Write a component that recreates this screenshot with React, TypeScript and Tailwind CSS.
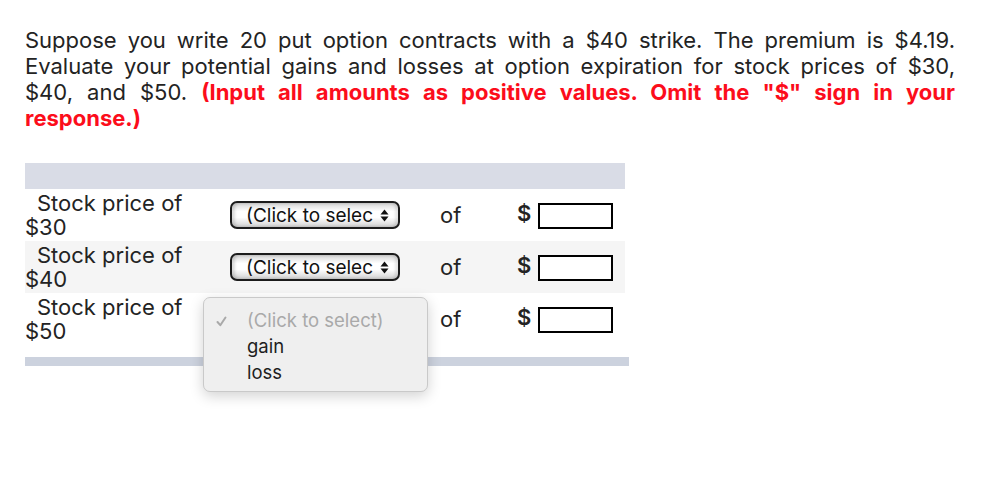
import React from "react";

const rows = [
  { price: "$30", shade: false, open: false },
  { price: "$40", shade: true, open: false },
  { price: "$50", shade: false, open: true },
];

function SelectArrows() {
  return (
    <svg width="9" height="15" viewBox="0 0 9 15" className="shrink-0">
      <path d="M4.5 1.5 L8.5 6.5 L0.5 6.5 Z" fill="#111" />
      <path d="M4.5 13.5 L8.5 8.5 L0.5 8.5 Z" fill="#111" />
    </svg>
  );
}

function FakeSelect() {
  return (
    <div className="flex h-[28px] w-[170px] items-center rounded-[7px] border-2 border-[#1c1c1c] bg-[linear-gradient(#d6d6d6,#ffffff_35%,#ffffff_60%,#d2d2d2)] pl-[14px] pr-[9px] shadow-[inset_3px_0_3px_rgba(0,0,0,0.14),inset_-3px_0_3px_rgba(0,0,0,0.1)]">
      <div className="whitespace-nowrap text-[19px] leading-none text-[#111]">
        (Click to selec
      </div>
      <div className="ml-auto">
        <SelectArrows />
      </div>
    </div>
  );
}

function Check() {
  return (
    <svg width="11" height="11" viewBox="0 0 11 11">
      <path d="M1.5 6 L4.3 9.2 L9.5 1.5" fill="none" stroke="#a9a9a9" strokeWidth="2" strokeLinecap="round" strokeLinejoin="round" />
    </svg>
  );
}

function Dropdown() {
  return (
    <div className="absolute left-[178px] top-[4px] z-10 h-[95px] w-[225px] rounded-[7px] border border-[#c9c9c9] bg-[#efefef] pt-[10px] shadow-[0_4px_14px_rgba(0,0,0,0.18)]">
      <div className="flex h-[26px] items-center text-[18.5px] text-[#a9a9a9]">
        <span className="flex w-[43px] pl-[12px]">
          <Check />
        </span>
        <span>(Click to select)</span>
      </div>
      <div className="flex h-[26px] items-center text-[18.5px] text-[#1e1e1e]">
        <span className="w-[43px]" />
        <span>gain</span>
      </div>
      <div className="flex h-[26px] items-center text-[18.5px] text-[#1e1e1e]">
        <span className="w-[43px]" />
        <span>loss</span>
      </div>
    </div>
  );
}

export default function App() {
  const line = "text-justify [text-align-last:justify]";
  return (
    <div className="min-h-[478px] w-[1004px] bg-white font-['Inter',sans-serif] text-[#232323]">
      <div className="ml-[25px] w-[930px] pt-[27px] text-[22px] leading-[26px]">
        <div className={line}>
          Suppose you write 20 put option contracts with a $40 strike. The premium is $4.19.
        </div>
        <div className={line}>
          Evaluate your potential gains and losses at option expiration for stock prices of $30,
        </div>
        <div className={line}>
          $40, and $50.{" "}
          <span className="font-bold text-[#fc0d1b]">
            (Input all amounts as positive values. Omit the "$" sign in your
          </span>
        </div>
        <div className="font-bold text-[#fc0d1b]">response.)</div>
      </div>

      <div className="ml-[25px] mt-[32px] w-[604px]">
        <div className="h-[26px] w-[600px] bg-[#d9dce6]" />
        {rows.map((r) => (
          <div
            key={r.price}
            className={`relative flex h-[52px] w-[600px] items-center ${r.shade ? "bg-[#f5f5f5]" : "bg-white"}`}
          >
            <div className="w-[205px] text-[22px] leading-[24px]">
              <div className="pl-[12px]">Stock price of</div>
              <div>{r.price}</div>
            </div>
            <div className="w-[170px]">{!r.open && <FakeSelect />}</div>
            <div className="ml-[40px] w-[77px] text-[22px]">of</div>
            <div className="flex items-start pt-[2px]">
              <span className="w-[21px] text-[22px] font-semibold leading-[20px]">$</span>
              <div className="h-[26px] w-[75px] border-2 border-black bg-white" />
            </div>
            {r.open && <Dropdown />}
          </div>
        ))}
        <div className="mt-[12px] h-[9px] w-[604px] bg-[#ccd2de]" />
      </div>
    </div>
  );
}
